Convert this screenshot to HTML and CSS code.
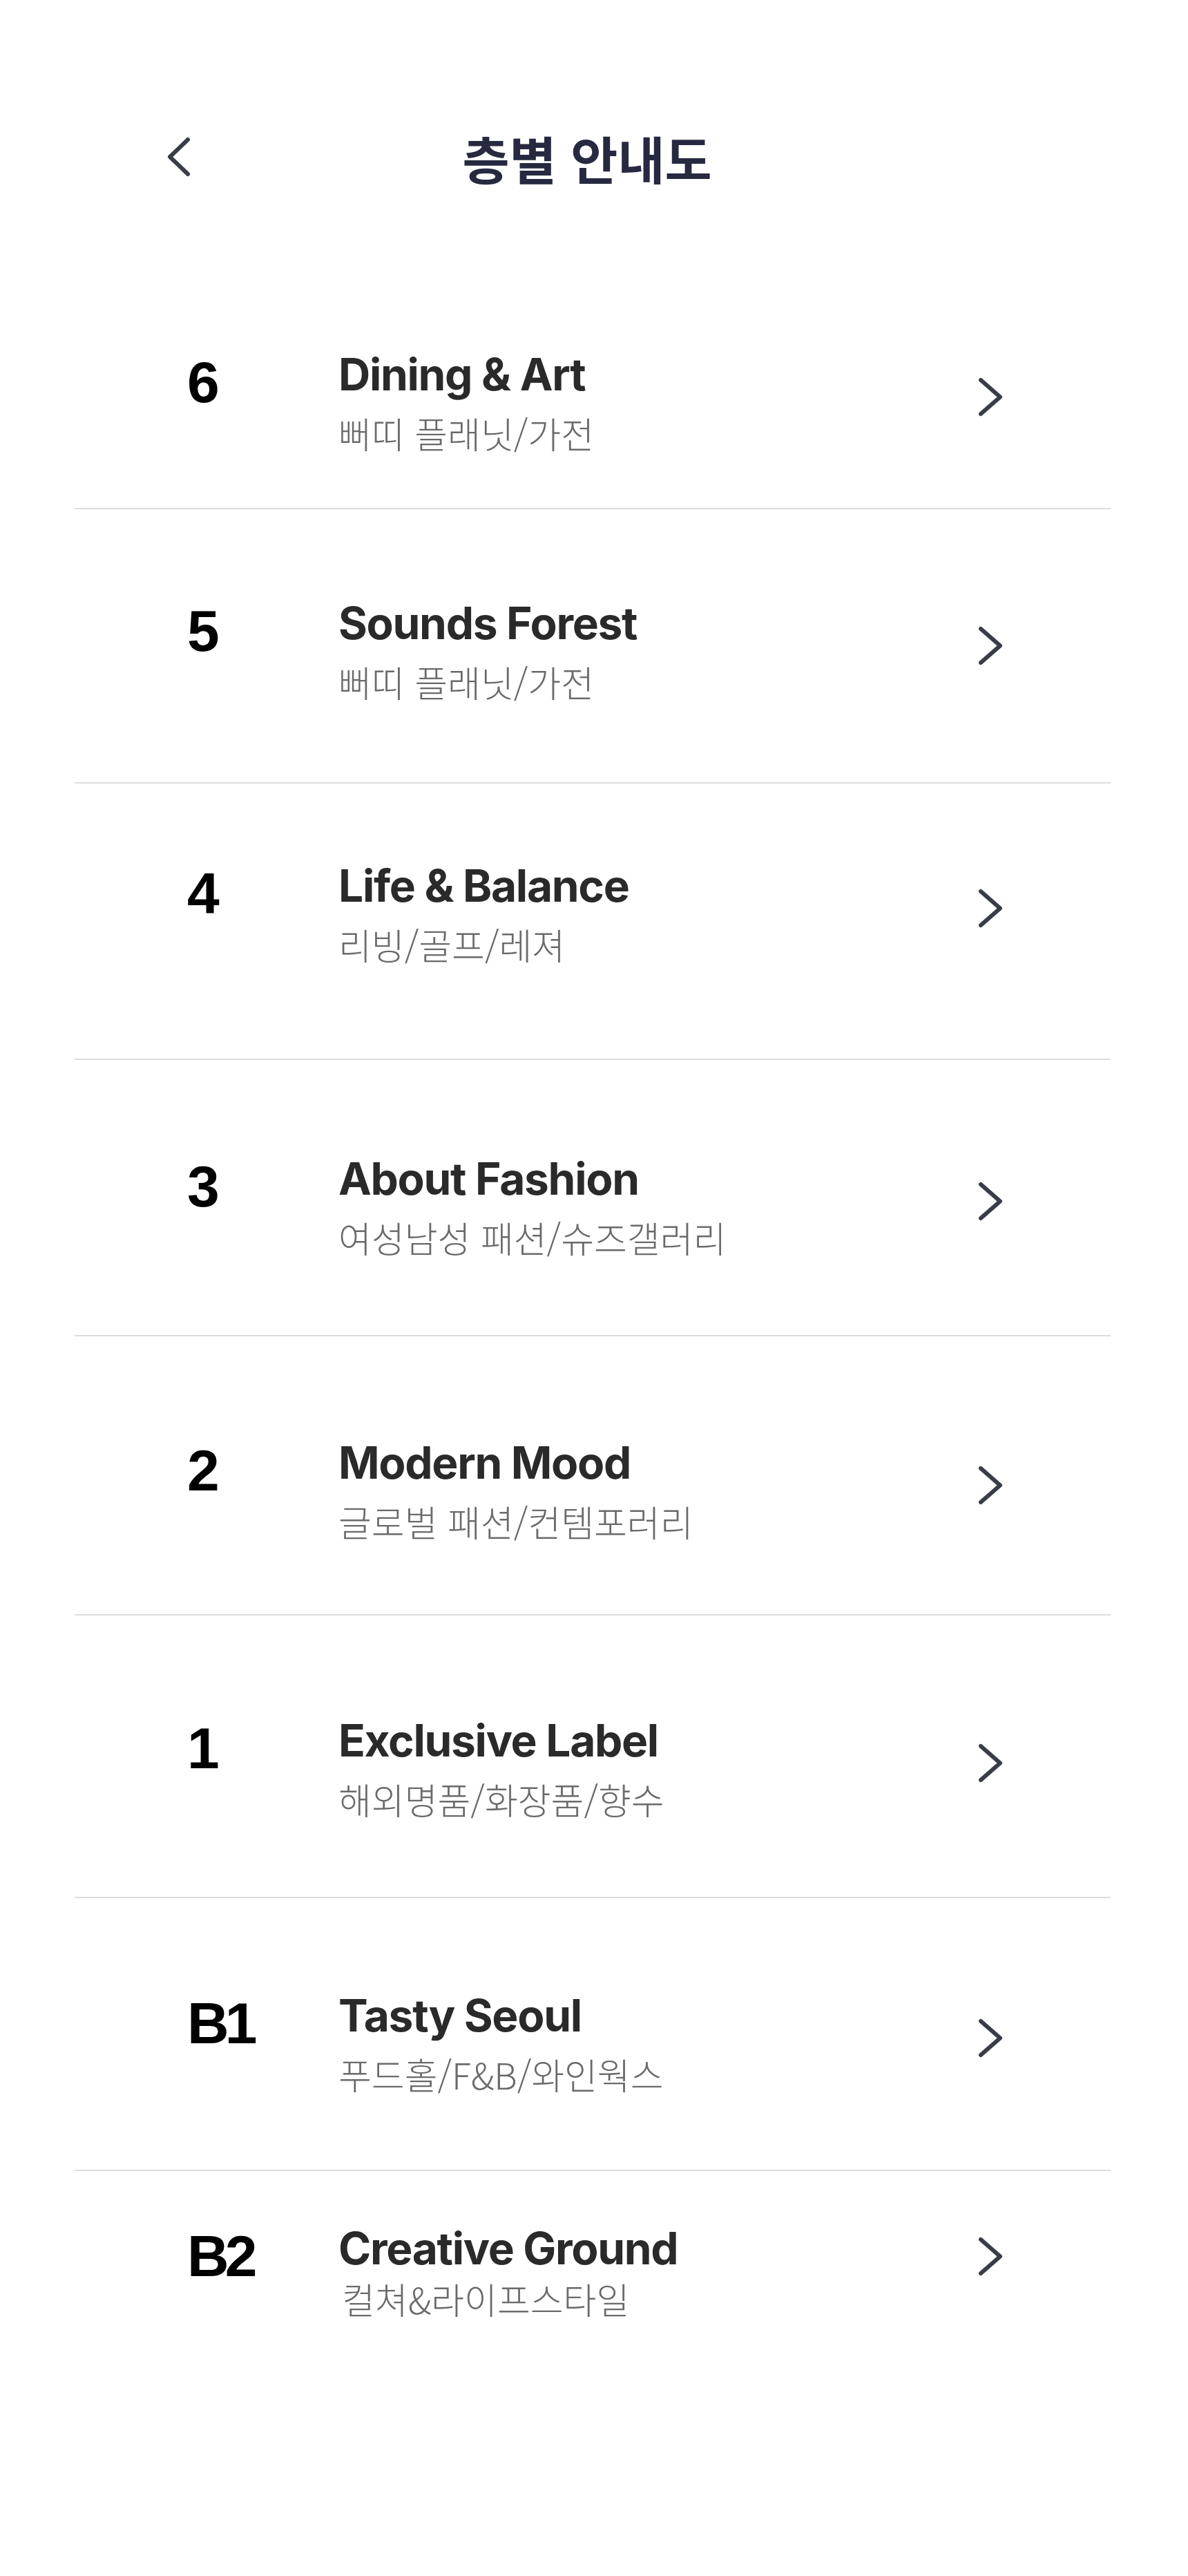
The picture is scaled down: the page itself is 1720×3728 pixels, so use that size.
FILE: index.html
```html
<!DOCTYPE html>
<html lang="ko">
<head>
<meta charset="utf-8">
<title>층별 안내도</title>
<link rel="stylesheet" href="styles.css">
</head>
<body>
<div class="page">
  <header class="topbar">
    <button class="back" aria-label="뒤로">
      <svg width="36" height="62" viewBox="0 0 36 62"><polyline points="29,5 3,30 29,55" fill="none" stroke="#383d48" stroke-width="6" stroke-linecap="round" stroke-linejoin="round"/></svg>
    </button>
    <h1 class="topbar-title">층별 안내도</h1>
    <span class="topbar-spacer"></span>
  </header>

  <ul class="floors">
    <li class="floor floor-6">
      <span class="floor-num">6</span>
      <div class="floor-text"><div class="floor-name">Dining &amp; Art</div><div class="floor-desc">뻐띠 플래닛/가전</div></div>
      <svg class="floor-go" width="40" height="62" viewBox="0 0 40 62"><polyline points="6,6 34,30.5 6,55" fill="none" stroke="#383d48" stroke-width="6" stroke-linecap="round" stroke-linejoin="round"/></svg>
    </li>
    <li class="floor floor-5">
      <span class="floor-num">5</span>
      <div class="floor-text"><div class="floor-name">Sounds Forest</div><div class="floor-desc">뻐띠 플래닛/가전</div></div>
      <svg class="floor-go" width="40" height="62" viewBox="0 0 40 62"><polyline points="6,6 34,30.5 6,55" fill="none" stroke="#383d48" stroke-width="6" stroke-linecap="round" stroke-linejoin="round"/></svg>
    </li>
    <li class="floor floor-4">
      <span class="floor-num">4</span>
      <div class="floor-text"><div class="floor-name">Life &amp; Balance</div><div class="floor-desc">리빙/골프/레져</div></div>
      <svg class="floor-go" width="40" height="62" viewBox="0 0 40 62"><polyline points="6,6 34,30.5 6,55" fill="none" stroke="#383d48" stroke-width="6" stroke-linecap="round" stroke-linejoin="round"/></svg>
    </li>
    <li class="floor floor-3">
      <span class="floor-num">3</span>
      <div class="floor-text"><div class="floor-name">About Fashion</div><div class="floor-desc">여성남성 패션/슈즈갤러리</div></div>
      <svg class="floor-go" width="40" height="62" viewBox="0 0 40 62"><polyline points="6,6 34,30.5 6,55" fill="none" stroke="#383d48" stroke-width="6" stroke-linecap="round" stroke-linejoin="round"/></svg>
    </li>
    <li class="floor floor-2">
      <span class="floor-num">2</span>
      <div class="floor-text"><div class="floor-name">Modern Mood</div><div class="floor-desc">글로벌 패션/컨템포러리</div></div>
      <svg class="floor-go" width="40" height="62" viewBox="0 0 40 62"><polyline points="6,6 34,30.5 6,55" fill="none" stroke="#383d48" stroke-width="6" stroke-linecap="round" stroke-linejoin="round"/></svg>
    </li>
    <li class="floor floor-1">
      <span class="floor-num">1</span>
      <div class="floor-text"><div class="floor-name">Exclusive Label</div><div class="floor-desc">해외명품/화장품/향수</div></div>
      <svg class="floor-go" width="40" height="62" viewBox="0 0 40 62"><polyline points="6,6 34,30.5 6,55" fill="none" stroke="#383d48" stroke-width="6" stroke-linecap="round" stroke-linejoin="round"/></svg>
    </li>
    <li class="floor floor-b1">
      <span class="floor-num">B1</span>
      <div class="floor-text"><div class="floor-name">Tasty Seoul</div><div class="floor-desc">푸드홀/F&amp;B/와인웍스</div></div>
      <svg class="floor-go" width="40" height="62" viewBox="0 0 40 62"><polyline points="6,6 34,30.5 6,55" fill="none" stroke="#383d48" stroke-width="6" stroke-linecap="round" stroke-linejoin="round"/></svg>
    </li>
    <li class="floor floor-b2">
      <span class="floor-num">B2</span>
      <div class="floor-text"><div class="floor-name">Creative Ground</div><div class="floor-desc">컬쳐&amp;라이프스타일</div></div>
      <svg class="floor-go" width="40" height="62" viewBox="0 0 40 62"><polyline points="6,6 34,30.5 6,55" fill="none" stroke="#383d48" stroke-width="6" stroke-linecap="round" stroke-linejoin="round"/></svg>
    </li>
  </ul>
</div>
</body>
</html>
```

FILE: styles.css
```css
* { box-sizing: border-box; }
html, body { margin: 0; padding: 0; background: #fff; }
body {
  font-family: "Noto Sans CJK KR", "Noto Sans", sans-serif;
  color: #2a2a2a;
}
.page {
  width: 1720px;
  min-height: 3728px;
}
.topbar {
  display: grid;
  grid-template-columns: 1fr auto 1fr;
  align-items: center;
  height: 130px;
  margin-top: 163px;
  padding-right: 20px;
}
.back {
  justify-self: start;
  margin-left: 243px;
  padding: 0;
  border: 0;
  background: none;
  display: flex;
  align-items: center;
}
.topbar-title {
  margin: 0;
  font-family: "Noto Sans CJK KR", sans-serif;
  font-weight: 700;
  font-size: 74px;
  line-height: 1;
  color: #262940;
}
.floors {
  list-style: none;
  margin: 44px 0 0 108px;
  padding: 0;
  width: 1500px;
}
.floor {
  display: grid;
  grid-template-columns: 219px 1fr 40px;
  align-items: start;
  padding-left: 163px;
  padding-right: 154px;
  border-bottom: 2px solid #dcdcdc;
}
.floor:last-child { border-bottom: 0; }
.floor-num {
  margin-top: 7px;
  font-family: "Liberation Sans", Arial, sans-serif;
  font-weight: 700;
  font-size: 84px;
  line-height: 1;
  letter-spacing: -6px;
  color: #000;
}
.floor-text { display: flex; flex-direction: column; gap: 12px; }
.floor-name {
  font-family: Inter, "Noto Sans", sans-serif;
  font-weight: 700;
  font-size: 64px;
  line-height: 1.2;
  letter-spacing: -1.3px;
  color: #2a2a2a;
}
.floor-desc {
  font-family: "Noto Sans CJK KR", sans-serif;
  font-weight: 300;
  font-size: 52px;
  line-height: 1.3;
  color: #6a6a6a;
}
.floor-go { margin-top: 40px; }

.floor-6 { height: 400px; padding-top: 167px; }
.floor-5 { height: 397px; padding-top: 127px; }
.floor-4 { height: 400px; padding-top: 110px; }
.floor-3 { height: 400px; padding-top: 134px; }
.floor-2 { height: 404px; padding-top: 145px; }
.floor-1 { height: 409px; padding-top: 143px; }
.floor-b1 { height: 395px; padding-top: 132px; }
.floor-b2 { height: 400px; padding-top: 74px; }
.floor-b2 .floor-text { gap: 0; }
.floor-b2 .floor-desc { padding-left: 5px; }
.floor-b2 .floor-go { margin-top: 19px; }
```
